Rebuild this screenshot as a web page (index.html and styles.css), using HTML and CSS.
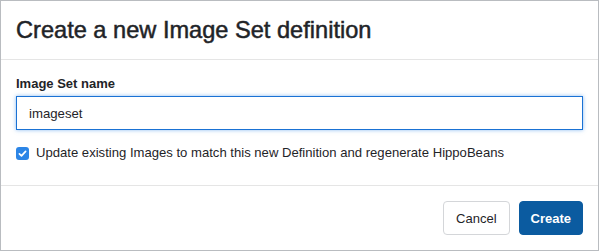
FILE: index.html
```html
<!DOCTYPE html>
<html lang="en">

<head>
    <meta charset="UTF-8">
    <meta name="viewport" content="width=device-width, initial-scale=1.0">
    <title>Create Image Set</title>
    <link rel="stylesheet" href="styles.css">
</head>

<body>
    <form class="modal" onsubmit="return false;">
        <div class="modal-header">
            <h2>Create a new Image Set definition</h2>
        </div>
        <div class="modal-body">
            <label class="field-label" for="imageset_name">Image Set name</label>
            <input type="text" id="imageset_name" class="text-input" value="imageset">
            <label class="check-row">
                <span class="check-box">
                    <svg width="13" height="13" viewBox="0 0 13 13">
                        <rect x="0" y="0" width="13" height="13" rx="3" fill="#2c85e6"/>
                        <path d="M3.4 6.8 L5.5 8.9 L9.6 4.4" fill="none" stroke="#fff" stroke-width="1.7" stroke-linecap="round" stroke-linejoin="round"/>
                    </svg>
                </span>
                Update existing Images to match this new Definition and regenerate HippoBeans
            </label>
        </div>
        <div class="modal-footer">
            <button type="button" class="btn btn-default">Cancel</button>
            <button type="submit" class="btn btn-primary">Create</button>
        </div>
    </form>
</body>

</html>
```

FILE: styles.css
```css
body {
    font-family: "Liberation Sans", Arial, sans-serif;
    background-color: #fff;
    margin: 0;
    color: #1f2428;
}

.modal {
    box-sizing: border-box;
    width: 599px;
    height: 251px;
    border: 1px solid #b9bcc0;
    background-color: white;
}

.modal-header {
    padding: 15px 15px;
    border-bottom: 1px solid #e5e5e5;
}

.modal-header h2 {
    margin: 0;
    font-size: 23.6px;
    line-height: 28px;
    font-weight: normal;
    -webkit-text-stroke: 0.5px #1f2428;
}

.modal-body {
    padding: 14px 15px 22px;
    border-bottom: 1px solid #e5e5e5;
}

.field-label {
    display: block;
    font-size: 13px;
    font-weight: bold;
    line-height: 20px;
    margin-bottom: 2px;
}

.text-input {
    box-sizing: border-box;
    display: block;
    width: 100%;
    height: 34px;
    padding: 0 12px;
    font-family: inherit;
    font-size: 13.2px;
    color: #1f2428;
    border: 1px solid #1a72d4;
    border-radius: 0;
    outline: none;
    box-shadow: 0 0 4px rgba(40, 130, 230, 0.55);
}

.check-row {
    display: flex;
    align-items: center;
    margin-top: 13px;
    font-size: 13.1px;
    line-height: 20px;
}

.check-box {
    display: flex;
    margin-right: 7px;
}

.modal-footer {
    display: flex;
    justify-content: flex-end;
    gap: 9px;
    padding: 15px 15px 0;
}

.btn {
    height: 34px;
    padding: 0 12px;
    font-family: inherit;
    font-size: 13px;
    border-radius: 4px;
    cursor: pointer;
}

.btn-default {
    background-color: white;
    color: #1f2428;
    border: 1px solid #d4d6d9;
}

.btn-primary {
    background-color: #0b5ba0;
    color: white;
    font-weight: bold;
    border: 1px solid #0b5ba0;
    padding: 0 11px;
}

.btn-primary:hover {
    background-color: #094b84;
}
```
